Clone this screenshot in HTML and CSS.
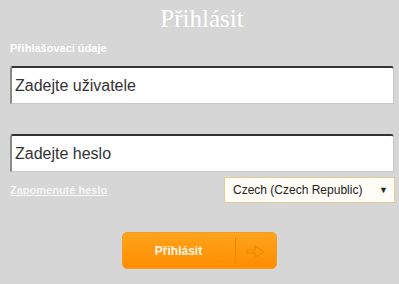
FILE: index.html
```html
<!DOCTYPE html>
<html lang="cs">
<head>
  <meta charset="UTF-8">
  <title>Přihlásit</title>
  <link rel="stylesheet" href="styles.css">
</head>
<body>

<div class="login">
  <h1>Přihlásit</h1>
  <p class="label">Přihlašovací údaje</p>
  <form class="login-form">
    <input type="text" class="field" placeholder="Zadejte uživatele">
    <input type="password" class="field" placeholder="Zadejte heslo">
    <div class="row">
      <a href="#" class="forgot">Zapomenuté heslo</a>
      <div class="lang">
        <span>Czech (Czech Republic)</span>
        <span class="caret">▼</span>
      </div>
    </div>
    <button type="submit" class="btn">
      <span class="btn-text">Přihlásit</span>
      <span class="btn-icon">
        <svg width="22" height="16" viewBox="0 0 22 16">
          <path d="M2 7 L10 7 L10 3 L19 9 L10 14 L10 10 L2 10 Z" fill="none" stroke="#e88a00" stroke-width="1.2" stroke-linejoin="round"/>
        </svg>
      </span>
    </button>
  </form>
</div>

</body>
</html>
```

FILE: styles.css
```css
body {
  margin: 0;
  padding: 0;
  background-color: #d6d6d6;
  font-family: Arial, "Liberation Sans", sans-serif;
}
.login {
  padding: 0 5px 0 10px;
}
.login h1 {
  margin: 0;
  padding-top: 4px;
  font-family: "Liberation Serif", "Times New Roman", serif;
  font-weight: normal;
  font-size: 25px;
  line-height: 29px;
  color: #fff;
  text-align: center;
}
.label {
  margin: 8px 0 0;
  font-size: 11px;
  font-weight: bold;
  line-height: 14px;
  color: #fff;
}
.login-form {
  display: flex;
  flex-direction: column;
}
.field {
  box-sizing: border-box;
  width: 384px;
  height: 38px;
  margin-top: 11px;
  padding: 0 3px;
  border: 1px solid #c8c8c8;
  border-top: 2px solid #333;
  border-left: 2px solid #8a8a8a;
  border-radius: 3px 3px 0 0;
  background: #fff;
  font-family: Arial, "Liberation Sans", sans-serif;
  font-size: 16px;
  color: #333;
  outline: none;
}
.field + .field {
  margin-top: 30px;
}
.field::placeholder {
  color: #333;
}
.row {
  display: flex;
  justify-content: space-between;
  align-items: center;
  width: 385px;
  margin-top: 5px;
}
.forgot {
  font-size: 11px;
  font-weight: bold;
  color: #f4f4f4;
  text-decoration: underline;
}
.lang {
  box-sizing: border-box;
  display: flex;
  justify-content: space-between;
  align-items: center;
  width: 171px;
  height: 26px;
  padding: 0 6px 0 8px;
  border: 1px solid #e3cb98;
  background: #fffdf6;
  font-size: 12px;
  color: #222;
}
.caret {
  font-size: 9px;
}
.btn {
  box-sizing: border-box;
  display: flex;
  align-items: center;
  align-self: center;
  width: 155px;
  height: 37px;
  margin: 29px 0 0 -6px;
  padding: 0;
  border: 1px solid #f0a020;
  border-radius: 5px;
  background: linear-gradient(#ffa41c, #ff8c00);
  cursor: pointer;
}
.btn-text {
  flex: 1;
  font-family: Arial, "Liberation Sans", sans-serif;
  font-size: 12px;
  font-weight: bold;
  color: #fff6e8;
  text-align: center;
}
.btn-icon {
  display: flex;
  align-items: center;
  justify-content: center;
  width: 40px;
  height: 27px;
  border-left: 1px solid #e88a00;
}
```
